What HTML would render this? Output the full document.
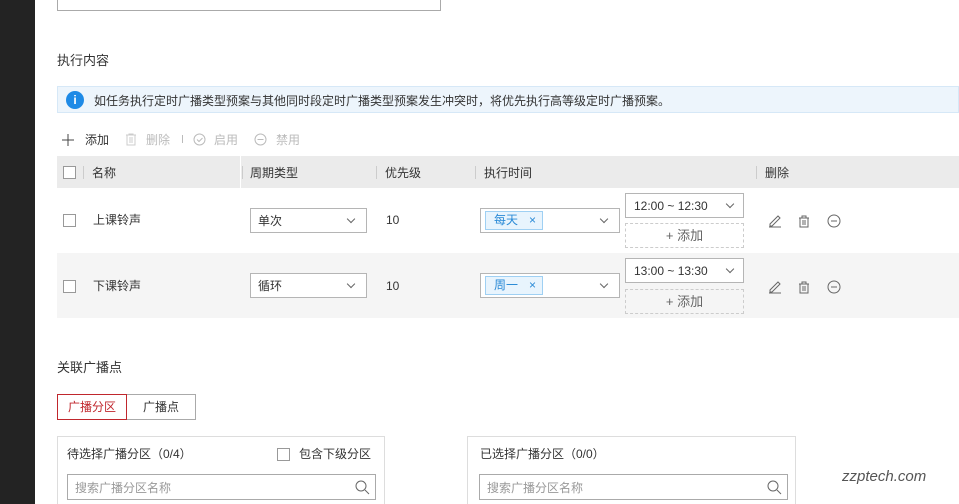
<!DOCTYPE html>
<html><head><meta charset="utf-8"><style>
*{box-sizing:border-box;margin:0;padding:0}
html{width:959px;height:504px;overflow:hidden}
body{width:959px;height:504px;overflow:hidden;background:#fff;position:relative;font-family:"Liberation Sans","Noto Sans CJK SC",sans-serif;font-size:12px;color:#333}
.a{position:absolute}
.t{position:absolute;white-space:nowrap;line-height:14px}
.cb{position:absolute;width:13px;height:13px;border:1px solid #999;background:#fff}
.sel{position:absolute;border:1px solid #b5b5b5;background:#fff;height:25px}
.chev{position:absolute;width:6px;height:6px;border-right:1px solid #666;border-bottom:1px solid #666;transform:rotate(45deg)}
.sep{position:absolute;width:1px;height:13px;background:#ccc}
.tag{position:absolute;background:#e8f4fd;border:1px solid #9fd0f3;color:#2a8ad6;height:19px;line-height:17px;padding-left:8px}
.dash{position:absolute;border:1px dashed #ccc;height:25px;color:#666;text-align:center;line-height:23px;font-size:13px}
</style></head><body>
<div class="a" style="left:0;top:0;width:35px;height:504px;background:#232323"></div>
<div class="a" style="left:57px;top:-5px;width:384px;height:16px;border:1px solid #aaa"></div>
<div class="t" style="left:57px;top:54px;font-size:13px">执行内容</div>
<div class="a" style="left:57px;top:86px;width:902px;height:27px;background:#edf5fc;border:1px solid #d6e8f7"></div>
<div class="a" style="left:66px;top:91px;width:18px;height:18px;border-radius:50%;background:#1e8ae6;color:#fff;font-weight:bold;font-size:12px;text-align:center;line-height:18px">i</div>
<div class="t" style="left:94px;top:94px">如任务执行定时广播类型预案与其他同时段定时广播类型预案发生冲突时，将优先执行高等级定时广播预案。</div>
<svg class="a" style="left:62px;top:134px" width="12" height="12" stroke="#444"><path d="M6 0v12M0 6h12"/></svg>
<div class="t" style="left:85px;top:133px">添加</div>
<svg class="a" style="left:125px;top:133px" width="12" height="13" fill="none" stroke="#ccc"><path d="M1 2h10M4 2V1h4v1M2 2v10h8V2M5 4v6M7 4v6"/></svg>
<div class="t" style="left:146px;top:133px;color:#bbb">删除</div>
<div class="sep" style="left:182px;top:135px;height:8px;background:#bbb"></div>
<svg class="a" style="left:193px;top:133px" width="13" height="13" fill="none" stroke="#bbb"><circle cx="6.5" cy="6.5" r="5.5"/><path d="M4 6.5l2 2 3.5-3.5"/></svg>
<div class="t" style="left:214px;top:133px;color:#bbb">启用</div>
<svg class="a" style="left:254px;top:133px" width="13" height="13" fill="none" stroke="#bbb"><circle cx="6.5" cy="6.5" r="5.5"/><path d="M3.5 6.5h6"/></svg>
<div class="t" style="left:276px;top:133px;color:#bbb">禁用</div>
<div class="a" style="left:57px;top:156px;width:902px;height:32px;background:#ebebeb"></div>
<div class="cb" style="left:63px;top:166px"></div>
<div class="sep" style="left:83px;top:166px"></div>
<div class="t" style="left:92px;top:166px">名称</div>
<div class="a" style="left:240px;top:156px;width:1px;height:32px;background:#fff"></div>
<div class="sep" style="left:242px;top:166px"></div>
<div class="t" style="left:250px;top:166px">周期类型</div>
<div class="sep" style="left:376px;top:166px"></div>
<div class="t" style="left:385px;top:166px">优先级</div>
<div class="sep" style="left:475px;top:166px"></div>
<div class="t" style="left:484px;top:166px">执行时间</div>
<div class="sep" style="left:756px;top:166px"></div>
<div class="t" style="left:765px;top:166px">删除</div>
<div class="a" style="left:57px;top:253px;width:902px;height:65px;background:#f5f5f5"></div>
<!-- row1 -->
<div class="cb" style="left:63px;top:214px"></div>
<div class="t" style="left:93px;top:213px">上课铃声</div>
<div class="sel" style="left:250px;top:208px;width:117px"><span class="t" style="left:7px;top:5px">单次</span><div class="chev" style="left:97px;top:7px"></div></div>
<div class="t" style="left:386px;top:213px">10</div>
<div class="sel" style="left:480px;top:208px;width:140px"><div class="tag" style="left:4px;top:2px;width:58px">每天<span style="position:absolute;left:43px">×</span></div><div class="chev" style="left:120px;top:7px"></div></div>
<div class="sel" style="left:625px;top:193px;width:119px"><span class="t" style="left:8px;top:5px">12:00 ~ 12:30</span><div class="chev" style="left:101px;top:7px"></div></div>
<div class="dash" style="left:625px;top:223px;width:119px">+ 添加</div>
<!-- row2 -->
<div class="cb" style="left:63px;top:280px"></div>
<div class="t" style="left:93px;top:279px">下课铃声</div>
<div class="sel" style="left:250px;top:273px;width:117px"><span class="t" style="left:7px;top:5px">循环</span><div class="chev" style="left:97px;top:7px"></div></div>
<div class="t" style="left:386px;top:279px">10</div>
<div class="sel" style="left:480px;top:273px;width:140px"><div class="tag" style="left:4px;top:2px;width:58px">周一<span style="position:absolute;left:43px">×</span></div><div class="chev" style="left:120px;top:7px"></div></div>
<div class="sel" style="left:625px;top:258px;width:119px"><span class="t" style="left:8px;top:5px">13:00 ~ 13:30</span><div class="chev" style="left:101px;top:7px"></div></div>
<div class="dash" style="left:625px;top:289px;width:119px">+ 添加</div>
<svg class="a" style="left:765px;top:210px" width="80" height="90" viewBox="0 0 80 90" fill="none" stroke="#666" stroke-width="1">
<g><path d="M5 14L13 6l2 2-8 8H5z M4 17h12"/><path d="M34 8h10M37 8V6h4v2M35 8v9h8V8M38 10v5M40 10v5"/><circle cx="69" cy="11" r="6"/><path d="M66 11h6"/></g>
<g transform="translate(0,66)"><path d="M5 14L13 6l2 2-8 8H5z M4 17h12"/><path d="M34 8h10M37 8V6h4v2M35 8v9h8V8M38 10v5M40 10v5"/><circle cx="69" cy="11" r="6"/><path d="M66 11h6"/></g>
</svg>
<div class="t" style="left:57px;top:361px;font-size:13px">关联广播点</div>
<div class="a" style="left:57px;top:394px;width:70px;height:26px;border:1px solid #c0272d;color:#c0272d;text-align:center;line-height:24px">广播分区</div>
<div class="a" style="left:127px;top:394px;width:69px;height:26px;border:1px solid #aaa;border-left:none;text-align:center;line-height:24px">广播点</div>
<div class="a" style="left:57px;top:436px;width:328px;height:70px;border:1px solid #ddd;border-bottom:none"></div>
<div class="t" style="left:67px;top:447px">待选择广播分区（0/4）</div>
<div class="cb" style="left:277px;top:448px"></div>
<div class="t" style="left:299px;top:447px">包含下级分区</div>
<div class="a" style="left:67px;top:474px;width:309px;height:26px;border:1px solid #aaa"><span class="t" style="left:7px;top:6px;color:#999">搜索广播分区名称</span></div>
<div class="a" style="left:467px;top:436px;width:329px;height:70px;border:1px solid #ddd;border-bottom:none"></div>
<div class="t" style="left:480px;top:447px">已选择广播分区（0/0）</div>
<div class="a" style="left:479px;top:474px;width:309px;height:26px;border:1px solid #aaa"><span class="t" style="left:7px;top:6px;color:#999">搜索广播分区名称</span></div>
<svg class="a" style="left:354px;top:479px" width="16" height="16" fill="none" stroke="#666"><circle cx="7" cy="7" r="5"/><path d="M11 11l4 4"/></svg>
<svg class="a" style="left:766px;top:479px" width="16" height="16" fill="none" stroke="#666"><circle cx="7" cy="7" r="5"/><path d="M11 11l4 4"/></svg>
<div class="t" style="left:842px;top:470px;font-size:15px;font-style:italic;color:#555">zzptech.com</div>
</body></html>
